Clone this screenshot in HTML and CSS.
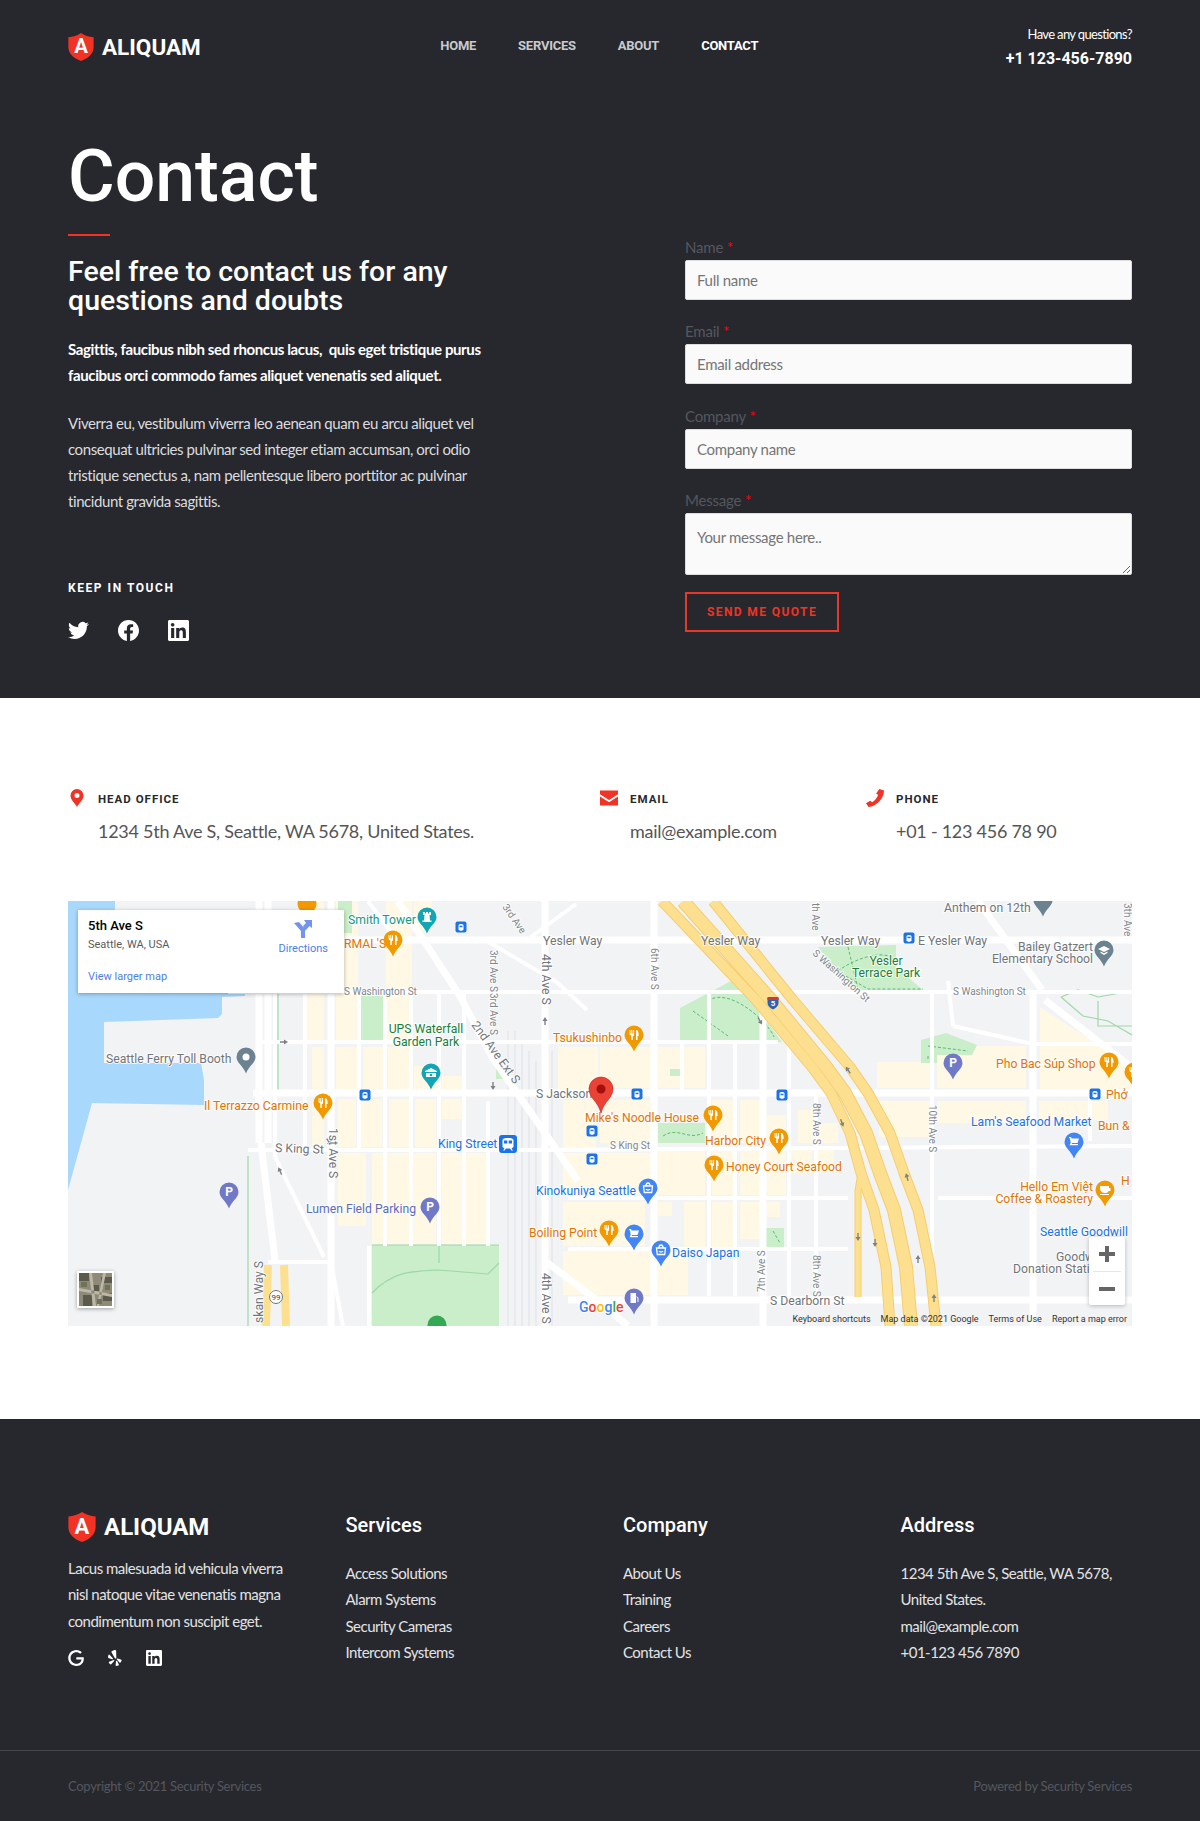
FILE: index.html
```html
<!DOCTYPE html>
<html lang="en">
<head>
    <meta charset="UTF-8">
    <meta name="viewport" content="width=device-width, initial-scale=1.0">
    <title>Aliquam - Contact</title>
    <link rel="stylesheet" href="styles.css">
</head>
<body>
    <svg class="icon-defs" width="0" height="0">
        <defs>
            <path id="ico-shield" d="M14 0C18 2.600 22.500 4.200 27.600 4.600V15C27.600 22 22.500 27 14 30 5.500 27 .4 22 .4 15V4.600C5.500 4.200 10 2.600 14 0z"/>
            <path id="ico-twitter" d="M23.953 4.570a10 10 0 01-2.825.775 4.958 4.958 0 002.163-2.723c-.951.555-2.005.959-3.127 1.184a4.920 4.920 0 00-8.384 4.482C7.690 8.095 4.067 6.130 1.640 3.162a4.822 4.822 0 00-.666 2.475c0 1.710.870 3.213 2.188 4.096a4.904 4.904 0 01-2.228-.616v.06a4.923 4.923 0 003.946 4.827 4.996 4.996 0 01-2.212.085 4.936 4.936 0 004.604 3.417 9.867 9.867 0 01-6.102 2.105c-.39 0-.779-.023-1.170-.067a13.995 13.995 0 007.557 2.209c9.053 0 13.998-7.496 13.998-13.985 0-.21 0-.42-.015-.63A9.935 9.935 0 0024 4.590z"/>
            <path id="ico-facebook" d="M24 12.073c0-6.627-5.373-12-12-12s-12 5.373-12 12c0 5.990 4.388 10.954 10.125 11.854v-8.385H7.078v-3.470h3.047V9.430c0-3.007 1.792-4.669 4.533-4.669 1.312 0 2.686.235 2.686.235v2.953H15.830c-1.491 0-1.956.925-1.956 1.874v2.250h3.328l-.532 3.470h-2.796v8.385C19.612 23.027 24 18.062 24 12.073z"/>
            <path id="ico-linkedin" d="M20.447 20.452h-3.554v-5.569c0-1.328-.027-3.037-1.852-3.037-1.853 0-2.136 1.445-2.136 2.939v5.667H9.351V9h3.414v1.561h.046c.477-.9 1.637-1.850 3.370-1.850 3.601 0 4.267 2.370 4.267 5.455v6.286zM5.337 7.433c-1.144 0-2.063-.926-2.063-2.065 0-1.138.920-2.063 2.063-2.063 1.140 0 2.064.925 2.064 2.063 0 1.139-.925 2.065-2.064 2.065zm1.782 13.019H3.555V9h3.564v11.452zM22.225 0H1.771C.792 0 0 .774 0 1.729v20.542C0 23.227.792 24 1.771 24h20.451C23.200 24 24 23.227 24 22.271V1.729C24 .774 23.200 0 22.222 0h.003z"/>
            <path id="ico-google" d="M12.480 10.920v3.280h7.840c-.24 1.840-.853 3.187-1.787 4.133-1.147 1.147-2.933 2.400-6.053 2.400-4.827 0-8.600-3.893-8.600-8.720s3.773-8.720 8.600-8.720c2.600 0 4.507 1.027 5.907 2.347l2.307-2.307C18.747 1.440 16.133 0 12.480 0 5.867 0 .307 5.387.307 12s5.560 12 12.173 12c3.573 0 6.267-1.173 8.373-3.360 2.160-2.160 2.840-5.213 2.840-7.667 0-.76-.053-1.467-.173-2.053H12.480z"/>
            <path id="pin" d="M0-9.500A9.500 9.500 0 0 1 9.500 0C9.500 6 3 8.500 0 16.500-3 8.500-9.500 6-9.500 0A9.500 9.500 0 0 1 0-9.500z"/>
            <path id="fork" fill="#fff" d="M-4.500-5h1v3.500h.8V-5h1v3.500h.8V-5h1v4.500c0 1-.7 1.500-1.300 1.700V5h-1.500V.2C-4-.1-4.500-.5-4.500-1.500zM2-5c1.800 0 2.600 1.800 2.600 4.500V1H3.500v4H2z"/>
            <path id="cart" fill="#fff" d="M-5-5h2l.6 1.500H5L3.500 1H-1.800l-.5 1H4v1.200H-4.500l1.200-2.500L-4-3.800H-5z"/>
            <path id="bag" fill="none" stroke="#fff" stroke-width="1.300" d="M-4.500-2h9l-.8 6.500h-7.400zM-2-2c0-4 4-4 4 0M-2 1c.8 1.300 3.200 1.300 4 0"/>
            <path id="arrow" fill="#7d8187" d="M0-4L2.500 0H.7V4H-.7V0H-2.500z"/>
            <g id="transit">
                <rect x="-5.500" y="-5.500" width="11" height="11" rx="2" fill="#1a73e8"/>
                <path fill="#fff" d="M-2.500-1.500c0-1 1-1.500 2.500-1.500s2.500.5 2.500 1.500V3h-1v.8h-3V3h-1z"/>
                <rect x="-1.500" y="-1.300" width="3" height="1.500" fill="#1a73e8"/>
            </g>
        </defs>
    </svg>

    <section class="hero">
        <header class="site-header">
            <a class="logo" href="#">
                <svg class="logo-mark" viewBox="0 0 28 30"><use href="#ico-shield" fill="#f13224"/><text class="logo-a" x="14" y="22">A</text></svg>
                <span>ALIQUAM</span>
            </a>
            <nav class="main-nav">
                <a href="#">Home</a>
                <a href="#">Services</a>
                <a href="#">About</a>
                <a href="#" class="active">Contact</a>
            </nav>
            <div class="header-call">
                <div class="call-label">Have any questions?</div>
                <div class="call-number">+1 123-456-7890</div>
            </div>
        </header>

        <div class="hero-body">
            <div class="hero-left">
                <h1>Contact</h1>
                <div class="red-rule"></div>
                <h2>Feel free to contact us for any questions and doubts</h2>
                <p class="lead">Sagittis, faucibus nibh sed rhoncus lacus,&nbsp; quis eget tristique purus faucibus orci commodo fames aliquet venenatis sed aliquet.</p>
                <p class="body-text">Viverra eu, vestibulum viverra leo aenean quam eu arcu aliquet vel consequat ultricies pulvinar sed integer etiam accumsan, orci odio tristique senectus a, nam pellentesque libero porttitor ac pulvinar tincidunt gravida sagittis.</p>
                <h4 class="keep-title">Keep in touch</h4>
                <div class="hero-social">
                    <a href="#"><svg viewBox="0 0 24 24"><use href="#ico-twitter"/></svg></a>
                    <a href="#"><svg viewBox="0 0 24 24"><use href="#ico-facebook"/></svg></a>
                    <a href="#"><svg viewBox="0 0 24 24"><use href="#ico-linkedin"/></svg></a>
                </div>
            </div>

            <form class="quote-form">
                <div class="form-group">
                    <label for="name">Name <span class="required">*</span></label>
                    <input type="text" id="name" placeholder="Full name">
                </div>
                <div class="form-group">
                    <label for="email">Email <span class="required">*</span></label>
                    <input type="email" id="email" placeholder="Email address">
                </div>
                <div class="form-group">
                    <label for="company">Company <span class="required">*</span></label>
                    <input type="text" id="company" placeholder="Company name">
                </div>
                <div class="form-group">
                    <label for="message">Message <span class="required">*</span></label>
                    <textarea id="message" placeholder="Your message here.."></textarea>
                </div>
                <button type="button" class="quote-button">Send me quote</button>
            </form>
        </div>
    </section>

    <section class="locate">
        <div class="info-row">
            <div class="info-item">
                <svg class="info-icon" viewBox="0 0 14 18"><path fill-rule="evenodd" d="M7 0a6.500 6.500 0 0 1 6.500 6.500C13.500 11 9 14 7 18 5 14 .5 11 .5 6.500A6.500 6.500 0 0 1 7 0zm0 4a2.500 2.500 0 1 0 0 5 2.500 2.500 0 0 0 0-5z"/></svg>
                <div>
                    <h5>Head office</h5>
                    <p>1234 5th Ave S, Seattle, WA 5678, United States.</p>
                </div>
            </div>
            <div class="info-item">
                <svg class="info-icon" viewBox="0 0 17 14"><path d="M0 0h17v3.500L8.500 9 0 3.500zM0 5.500l8.500 5.500L17 5.500V14H0z"/></svg>
                <div>
                    <h5>Email</h5>
                    <p>mail@example.com</p>
                </div>
            </div>
            <div class="info-item">
                <svg class="info-icon" viewBox="0 0 17 17"><path d="M12.500 0 17 1.500C17 9 10 16.500 2.500 17L0 13.500l4-2.500 1.800 1.600C8 11.500 10.500 8.500 11.500 5.500L9.500 4.500z"/></svg>
                <div>
                    <h5>Phone</h5>
                    <p>+01 - 123 456 78 90</p>
                </div>
            </div>
        </div>

        <div class="map">
            <svg class="map-canvas" viewBox="0 0 1064 425" width="1064" height="425">
                <rect width="1064" height="425" fill="#f2f3f5"/>
                <path class="water" d="M0 0H47V30L177 60V95L154 96V113L150 117 36 121V162L133 162 136 179V204L24 202 0 289z"/>

                <path class="cream" d="M238 0h18v139h-18zM268 0h22v139h-22zM318 0h26v139h-26zM244 146h12v45h-12zM268 146h23v45h-23zM295 146h22v45h-22zM320 146h23v45h-23zM346 165h25v26h-25zM374 175h22v16h-22zM270 198h18v48h-18zM292 198h22v48h-22zM321 198h21v48h-21zM347 198h21v48h-21zM374 198h22v20h-22zM270 252h28v73h-28zM304 252h64v91h-64zM374 252h46v91h-46zM244 200h12v50h-12zM346 0h18v30h-18z"/>
                <path class="cream" d="M490 146h40v45h-40zM532 146h51v41h-51zM590 146h47v41h-47zM532 199h51v43h-51zM644 199h21v43h-21zM672 199h20v43h-20zM699 214h19v28h-19zM730 209h16v33h-16zM750 222h20v20h-20zM495 199h33v50h-33zM495 252h88v42h-88zM590 249h47v45h-47zM644 249h21v45h-21zM672 249h20v45h-20zM699 249h19v45h-19zM723 249h21v23h-21zM750 249h16v17h-16zM590 301h14v14h-14zM616 301h21v45h-21zM644 301h21v45h-21zM672 301h20v37h-20zM699 301h13v15h-13zM495 350h88v44h-88zM590 350h30v44h-30zM495 301h82v44h-82z"/>
                <path class="cream" d="M809 161h53v26h-53zM869 145h89v42h-89zM972 106l92 60v23h-92zM811 200h51v36h-51zM869 200h89v22h-89zM971 200h69v19h-69z"/>

                <path class="park" d="M270 0h14v32h-14zM291 95h26v44h-26zM304 344H431V425H304zM750 46l78-2v22l27 23h-67l-28-30zM665 79l-53 28v32l102 2-31-42zM590 222h47v20h-47zM697 327h19v19h-19zM853 139l25-7 31 12-5 10h-35v8h-16zM602 168h10v7h-10zM428 156l12 22h-12z"/>
                <path class="park-line" d="M210 91V195M180 255V425M304 344H431M371 344V362M304 392C325 370 345 370 370 369L420 373 431 362M993 96L1010 89 1030 96 1064 90M993 96L1015 115 1040 120 1064 134M1030 100V125H1064"/>
                <path class="trail" d="M752 60L800 88H855M770 70C790 55 820 48 828 60M780 46L790 88M640 100C660 85 700 120 706 136M625 110L660 135M595 235C610 225 620 240 635 232M705 330L712 342M860 145L900 150M860 155V160"/>

                <path class="rail" d="M440 130V425M447 130V425M454 140V425M461 150V425M468 160V425M484 150V425"/>

                <g class="road road-thin">
                    <path d="M207 91V256M291 91V250M317 91V345M343 91V345M371 91V345M396 91V345M237 91V250M420 200V345M614 140V190M641 91V395M667 140V395M721 140V395M748 190V395M864 90V425M586 50V91M1022 190V240"/>
                    <path d="M160 91H1064M190 141H700M540 141L710 141M180 249L480 249 1064 245M500 297H780M870 297H1064M500 348H780M885 125L965 143H1064M207 256L256 356M200 361H263M263 361L275 425M301 345L301 425M880 80L885 125"/>
                    <path d="M300 0L330 40M508 3L463 36M417 39L490 82 519 109"/>
                </g>
                <g class="road road-main">
                    <path d="M263 0V425M586 0V425M695 91V425M965 89V425M477 0V425"/>
                    <path d="M262 39H1064M185 192H1064M500 399H1064M193 242L207 359M191 0V242M200 0V242"/>
                    <path d="M330 0L392 95 424 156 477 232 510 280M910 0L974 89M977 99L1058 162 1064 170M477 360L530 400 560 425"/>
                </g>

                <path class="hwy-edge edge-a" d="M594 0L688 99 744 166 763 192 782 232 793 272 806 309 818 366 822 425M645 0L725 99 782 166 800 192 822 232 836 272 850 309 862 366 868 425"/>
                <path class="hwy-edge edge-b" d="M793 272L790 290V396"/>
                <path class="hwy-edge edge-c" d="M615 0L703 99 758 166 777 192 798 232 812 272 826 309 838 366 843 425"/>
                <path class="hwy-a" d="M594 0L688 99 744 166 763 192 782 232 793 272 806 309 818 366 822 425"/>
                <path class="hwy-b" d="M793 272L790 290V396"/>
                <path class="hwy-c" d="M615 0L703 99 758 166 777 192 798 232 812 272 826 309 838 366 843 425"/>
                <path class="hwy-a" d="M645 0L725 99 782 166 800 192 822 232 836 272 850 309 862 366 868 425"/>
                <path class="hwy-stub" d="M200 364L198 425M216 364L218 425"/>

                <!-- one way arrows -->
                <use href="#arrow" transform="translate(692 120) rotate(150)"/>
                <use href="#arrow" transform="translate(774 222) rotate(160)"/>
                <use href="#arrow" transform="translate(780 169) rotate(-35)"/>
                <use href="#arrow" transform="translate(839 276) rotate(-15)"/>
                <use href="#arrow" transform="translate(790 336) rotate(180)"/>
                <use href="#arrow" transform="translate(807 342) rotate(180)"/>
                <use href="#arrow" transform="translate(850 358)"/>
                <use href="#arrow" transform="translate(866 397)"/>
                <use href="#arrow" transform="translate(261 241) rotate(145)"/>
                <use href="#arrow" transform="translate(212 270) rotate(-25)"/>
                <use href="#arrow" transform="translate(477 120)"/>
                <use href="#arrow" transform="translate(425 185) rotate(180)"/>
                <use href="#arrow" transform="translate(216 141) rotate(90)"/>

                <!-- street names -->
                <g class="lbl gray">
                    <text x="475" y="44">Yesler Way</text>
                    <text x="633" y="44">Yesler Way</text>
                    <text x="753" y="44">Yesler Way</text>
                    <text x="850" y="44">E Yesler Way</text>
                    <text x="468" y="197">S Jackson</text>
                    <text x="207" y="251" transform="rotate(2 207 251)">S King St</text>
                    <text x="702" y="404">S Dearborn St</text>
                    <text x="38" y="162">Seattle Ferry Toll Booth</text>
                    <text x="876" y="11">Anthem on 12th</text>
                    <text x="1025" y="50" class="end">Bailey Gatzert</text>
                    <text x="1025" y="62" class="end">Elementary School</text>
                    <text x="988" y="360">Goodwill</text>
                    <text x="945" y="372">Donation Station</text>
                    <text x="403" y="124" transform="rotate(54 403 124)">2nd Ave Ext S</text>
                    <text transform="translate(261 227) rotate(90)">1st Ave S</text>
                    <text transform="translate(474 372) rotate(90)">4th Ave S</text>
                    <text transform="translate(474 53) rotate(90)">4th Ave S</text>
                    <text transform="translate(195 422) rotate(-90)">skan Way S</text>
                </g>
                <g class="lbl small">
                    <text x="276" y="94">S Washington St</text>
                    <text x="885" y="94">S Washington St</text>
                    <text transform="translate(744 53) rotate(42)">S Washington St</text>
                    <text x="542" y="248">S King St</text>
                    <text transform="translate(422 49) rotate(90)">3rd Ave S</text>
                    <text transform="translate(422 92) rotate(90)">3rd Ave S</text>
                    <text transform="translate(434 6) rotate(55)">3rd Ave</text>
                    <text transform="translate(583 47) rotate(90)">6th Ave S</text>
                    <text transform="translate(745 202) rotate(90)">8th Ave S</text>
                    <text transform="translate(745 354) rotate(90)">8th Ave S</text>
                    <text transform="translate(861 204) rotate(90)">10th Ave S</text>
                    <text transform="translate(697 391) rotate(-90)">7th Ave S</text>
                    <text transform="translate(744 2) rotate(90)">th Ave</text>
                    <text transform="translate(1056 2) rotate(90)">3th Ave</text>
                </g>
                <g class="lbl orange">
                    <text x="276" y="47">RMAL'S</text>
                    <text x="485" y="141">Tsukushinbo</text>
                    <text x="136" y="209">Il Terrazzo Carmine</text>
                    <text x="517" y="221">Mike's Noodle House</text>
                    <text x="637" y="244">Harbor City</text>
                    <text x="658" y="270">Honey Court Seafood</text>
                    <text x="461" y="336">Boiling Point</text>
                    <text x="928" y="167">Pho Bac Súp Shop</text>
                    <text x="1038" y="198">Phở</text>
                    <text x="1030" y="229">Bun &amp;</text>
                    <text x="1025" y="290" class="end">Hello Em Việt</text>
                    <text x="1025" y="302" class="end">Coffee &amp; Roastery</text>
                    <text x="1053" y="284">H</text>
                </g>
                <g class="lbl blue">
                    <text x="370" y="247">King Street</text>
                    <text x="468" y="294">Kinokuniya Seattle</text>
                    <text x="604" y="356">Daiso Japan</text>
                    <text x="903" y="225">Lam's Seafood Market</text>
                    <text x="972" y="335">Seattle Goodwill</text>
                </g>
                <g class="lbl green">
                    <text x="358" y="132" class="mid">UPS Waterfall</text>
                    <text x="358" y="145" class="mid">Garden Park</text>
                    <text x="818" y="64" class="mid">Yesler</text>
                    <text x="818" y="76" class="mid">Terrace Park</text>
                </g>
                <text class="lbl teal" x="280" y="23">Smith Tower</text>
                <text class="lbl indigo" x="238" y="312">Lumen Field Parking</text>

                <!-- pins -->
                <g class="pin-orange">
                    <g transform="translate(239 3)"><use href="#pin"/></g>
                    <g transform="translate(325 39)"><use href="#pin"/><use href="#fork"/></g>
                    <g transform="translate(255 202)"><use href="#pin"/><use href="#fork"/></g>
                    <g transform="translate(566 134)"><use href="#pin"/><use href="#fork"/></g>
                    <g transform="translate(645 214)"><use href="#pin"/><use href="#fork"/></g>
                    <g transform="translate(711 237)"><use href="#pin"/><use href="#fork"/></g>
                    <g transform="translate(646 264)"><use href="#pin"/><use href="#fork"/></g>
                    <g transform="translate(541 329)"><use href="#pin"/><use href="#fork"/></g>
                    <g transform="translate(1041 161)"><use href="#pin"/><use href="#fork"/></g>
                    <g transform="translate(1066 171)"><use href="#pin"/><use href="#fork"/></g>
                    <g transform="translate(1037 289)"><use href="#pin"/><path fill="#fff" d="M-5-4H4V-2H5.500V1H3.500C3 2.500 2 3 0 3S-4 2.500-5-1zM-5 4H4V5H-5z"/></g>
                </g>
                <g class="pin-blue">
                    <g transform="translate(580 287)"><use href="#pin"/><use href="#bag"/></g>
                    <g transform="translate(566 333)"><use href="#pin"/><use href="#cart"/></g>
                    <g transform="translate(593 349)"><use href="#pin"/><use href="#bag"/></g>
                    <g transform="translate(1006 241)"><use href="#pin"/><use href="#cart"/></g>
                </g>
                <g class="pin-indigo">
                    <g transform="translate(161 291)"><use href="#pin"/><text class="pin-p" y="4">P</text></g>
                    <g transform="translate(362 306)"><use href="#pin"/><text class="pin-p" y="4">P</text></g>
                    <g transform="translate(885 162)"><use href="#pin"/><text class="pin-p" y="4">P</text></g>
                    <g transform="translate(566 397)"><use href="#pin"/><path fill="#fff" d="M-3.500-5H2V5H-3.500zM2.500-2L4.500 0V4H3.500V.5L2.500-1z"/></g>
                </g>
                <g class="pin-gray">
                    <g transform="translate(178 156)"><use href="#pin"/><circle r="3.500" fill="#fff"/></g>
                    <g transform="translate(975 -1)"><use href="#pin"/></g>
                    <g transform="translate(1036 49)"><use href="#pin"/><path fill="#fff" d="M0-4L6-1 0 2-6-1zM-3.500 1.500L0 3.300 3.500 1.500V3L0 5-3.500 3z"/></g>
                </g>
                <g class="pin-teal">
                    <g transform="translate(359 16)"><use href="#pin"/><path fill="#fff" d="M-4-5h2v1.500h1V-5h2v1.500h1V-5h2v3H2.500L3 3.500H4.500V5h-9V3.500H-3L-2.500-2H-4z"/></g>
                    <g transform="translate(363 172)"><use href="#pin"/><path fill="#fff" d="M0-5L6-2V-1H-6V-2zM-5 0H5V4H-5z"/><circle cy="2" r="1.300" fill="#12a5b5"/></g>
                </g>
                <g class="pin-green" transform="translate(369 424)"><use href="#pin"/></g>

                <!-- transit stops -->
                <use href="#transit" x="393" y="26"/>
                <use href="#transit" x="841" y="37"/>
                <use href="#transit" x="297" y="194"/>
                <use href="#transit" x="524" y="230"/>
                <use href="#transit" x="524" y="258"/>
                <use href="#transit" x="569" y="193"/>
                <use href="#transit" x="714" y="194"/>
                <use href="#transit" x="1027" y="193"/>
                <g transform="translate(440 243)">
                    <rect x="-9" y="-9" width="18" height="18" rx="3" fill="#1a73e8"/>
                    <path fill="#fff" d="M-5.500-3.500c0-2 2.500-2.500 5.500-2.500s5.500.5 5.500 2.500V3L3.500 4.500 5 6.500H3.500L2 4.500H-2L-3.500 6.500H-5L-3.500 4.500-5.500 3z"/>
                    <rect x="-4" y="-3.500" width="3.300" height="3" fill="#1a73e8"/>
                    <rect x=".7" y="-3.500" width="3.300" height="3" fill="#1a73e8"/>
                </g>

                <!-- I-5 shield -->
                <g transform="translate(705 102)">
                    <path d="M-5.500-5h11v5c0 3-2.500 5-5.500 6.500C-3 5-5.500 3-5.500 0z" fill="#2b62b5"/>
                    <rect x="-5.500" y="-6" width="11" height="3" fill="#cf3a33"/>
                    <text class="shield-num" y="3">5</text>
                </g>
                <!-- 99 shield -->
                <g transform="translate(208 396)">
                    <circle r="6.500" fill="#fff" stroke="#70757a"/>
                    <text class="shield-99" y="3">99</text>
                </g>

                <!-- selected place marker -->
                <g transform="translate(533 191)">
                    <path d="M0-15A12 12 0 0 1 12-3C12 6 3 9 0 21-3 9-12 6-12-3A12 12 0 0 1 0-15z" fill="#ea4335" stroke="#c5221f" stroke-width=".6"/>
                    <circle cy="-3" r="4.500" fill="#a50e0e"/>
                </g>

                <text class="g-logo" x="511" y="411"><tspan fill="#4285f4">G</tspan><tspan fill="#ea4335">o</tspan><tspan fill="#fbbc04">o</tspan><tspan fill="#4285f4">g</tspan><tspan fill="#34a853">l</tspan><tspan fill="#ea4335">e</tspan></text>
            </svg>

            <div class="place-card">
                <div class="place-main">
                    <div class="place-name">5th Ave S</div>
                    <div class="place-addr">Seattle, WA, USA</div>
                    <a class="place-link" href="#">View larger map</a>
                </div>
                <div class="place-dir">
                    <svg width="18" height="18" viewBox="0 0 18 18"><path fill="#7394ec" d="M0 3L5 2 11 9V18H7V11zM9 6L12 3 10 0H18V8L15.500 6 11.500 10.500z"/></svg>
                    <span>Directions</span>
                </div>
            </div>

            <div class="sat-thumb">
                <svg width="33" height="33" viewBox="0 0 33 33">
                    <rect width="33" height="33" fill="#8f8a77"/>
                    <path fill="#5c5a4c" d="M0 0h10v8H0zM22 4h11v6H22zM4 22h9v11H4zM24 20h9v8h-9zM14 12h6v6h-6z"/>
                    <path fill="#bdb8a6" d="M10 0l4 33h3L13 0zM0 15l33 6v3L0 18zM24 0l-6 33h2L27 0z"/>
                    <path fill="#6e7358" d="M2 9h6v5H2zM26 12h5v5h-5zM18 26h5v5h-5z"/>
                </svg>
            </div>

            <div class="zoom-ctrl">
                <div class="zoom-btn"><span class="zoom-plus"></span></div>
                <div class="zoom-sep"></div>
                <div class="zoom-btn"><span class="zoom-minus"></span></div>
            </div>

            <div class="map-attr">
                <span>Keyboard shortcuts</span>
                <span>Map data ©2021 Google</span>
                <span>Terms of Use</span>
                <span>Report a map error</span>
            </div>
        </div>
    </section>

    <footer class="site-footer">
        <div class="footer-main">
            <div class="footer-col">
                <a class="logo logo-footer" href="#">
                    <svg class="logo-mark" viewBox="0 0 28 30"><use href="#ico-shield" fill="#f13224"/><text class="logo-a" x="14" y="22">A</text></svg>
                    <span>ALIQUAM</span>
                </a>
                <p class="footer-about">Lacus malesuada id vehicula viverra nisl natoque vitae venenatis magna condimentum non suscipit eget.</p>
                <div class="footer-social">
                    <a href="#"><svg viewBox="0 0 24 24"><use href="#ico-google"/></svg></a>
                    <a href="#"><svg class="yelp" viewBox="0 0 24 24"><path d="M11 0c1-.4 2.500 0 2.700.6L14 11.500c0 1.500-1.600 1.800-2.200.8L6.500 3C6 2 9 .6 11 0zM10 15c1 .1 1.300.9.8 1.500L6 21.800c-.5.500-3-1.500-3.300-3-.1-.6.100-.9.500-1zM8.800 12.500c.4 1.200-.3 1.700-1 1.500L2 12.100c-.8-.3-.4-4 .6-5 .3-.3.800-.3 1.200 0zM13.500 16.800c.7-.9 1.700-.6 2 .2L18 22.500c.1.700-3 1.800-4.500 1.300-.4-.2-.7-.6-.6-1zM14.500 13.700c.1-.9 1-1.400 1.700-.9l5.500 2c.7.4-.6 3.800-1.800 4.300-.5.200-.9.100-1.200-.2z"/></svg></a>
                    <a href="#"><svg viewBox="0 0 24 24"><use href="#ico-linkedin"/></svg></a>
                </div>
            </div>
            <div class="footer-col">
                <h3>Services</h3>
                <ul>
                    <li>Access Solutions</li>
                    <li>Alarm Systems</li>
                    <li>Security Cameras</li>
                    <li>Intercom Systems</li>
                </ul>
            </div>
            <div class="footer-col">
                <h3>Company</h3>
                <ul>
                    <li>About Us</li>
                    <li>Training</li>
                    <li>Careers</li>
                    <li>Contact Us</li>
                </ul>
            </div>
            <div class="footer-col">
                <h3>Address</h3>
                <ul>
                    <li>1234 5th Ave S, Seattle, WA 5678, United States.</li>
                    <li>mail@example.com</li>
                    <li>+01-123 456 7890</li>
                </ul>
            </div>
        </div>
        <div class="footer-bottom">
            <span>Copyright © 2021 Security Services</span>
            <span>Powered by Security Services</span>
        </div>
    </footer>
</body>
</html>
```
FILE: styles.css
```css
* {
    box-sizing: border-box;
}
body {
    margin: 0;
    font-family: "Lato", "Liberation Sans", sans-serif;
    font-size: 16px;
    background: #fff;
    color: #555;
}
a {
    color: inherit;
    text-decoration: none;
}
.icon-defs {
    position: absolute;
}

/* hero */
.hero {
    background: #26282e;
    color: #fff;
    height: 698px;
}
.site-header {
    display: flex;
    justify-content: space-between;
    align-items: center;
    padding: 22px 68px 21px;
}
.logo {
    display: flex;
    align-items: center;
    gap: 8px;
    font-family: "Roboto", sans-serif;
    font-weight: 700;
    font-size: 22.500px;
    color: #fff;
}
.logo-mark {
    width: 26px;
    height: 28px;
    display: block;
}
.logo-a {
    font-family: "Roboto", sans-serif;
    font-weight: 700;
    font-size: 22px;
    fill: #fff;
    text-anchor: middle;
}
.main-nav {
    display: flex;
    gap: 42px;
    margin-right: 8px;
    padding-bottom: 2px;
    font-family: "Roboto", sans-serif;
    font-weight: 700;
    font-size: 13px;
    letter-spacing: -0.25px;
    text-transform: uppercase;
    color: #c9cacc;
}
.main-nav .active {
    color: #fff;
}
.header-call {
    text-align: right;
}
.call-label {
    font-size: 13px;
    line-height: 24px;
    letter-spacing: -0.65px;
}
.call-number {
    font-family: "Roboto", sans-serif;
    font-weight: 700;
    font-size: 16px;
    line-height: 25px;
}
.hero-body {
    display: flex;
    justify-content: space-between;
    padding: 0 68px;
}
.hero-left {
    width: 420px;
    padding-top: 49px;
}
h1 {
    font-family: "Roboto", sans-serif;
    font-weight: 500;
    font-size: 71.500px;
    line-height: 72px;
    margin: 0;
}
.red-rule {
    width: 42px;
    height: 2px;
    background: #f13224;
    margin-top: 21px;
}
h2 {
    font-family: "Roboto", sans-serif;
    font-weight: 500;
    font-size: 28.500px;
    line-height: 29px;
    margin: 21px 0 0;
}
.lead {
    font-weight: 700;
    font-size: 15px;
    line-height: 26.400px;
    letter-spacing: -0.37px;
    margin: 21px 0 0;
}
.body-text {
    font-size: 15px;
    line-height: 26.200px;
    letter-spacing: -0.42px;
    margin: 21px 0 0;
    color: #dcdcdf;
}
.keep-title {
    font-family: "Roboto", sans-serif;
    font-weight: 700;
    font-size: 12px;
    line-height: 16px;
    letter-spacing: 1.550px;
    text-transform: uppercase;
    margin: 65px 0 0;
}
.hero-social {
    display: flex;
    gap: 29px;
    margin-top: 24px;
}
.hero-social svg {
    width: 21px;
    height: 21px;
    display: block;
    fill: #fff;
}

/* form */
.quote-form {
    width: 447px;
    padding-top: 145px;
}
.form-group {
    margin-bottom: 21.300px;
}
.form-group:last-of-type {
    margin-bottom: 17px;
}
label {
    display: block;
    font-size: 15px;
    letter-spacing: -0.2px;
    line-height: 20px;
    margin-bottom: 3px;
    color: #55575e;
}
label .required {
    color: #f00;
}
input,
textarea {
    display: block;
    width: 100%;
    height: 40px;
    padding: 0 11px;
    border: 1px solid #ddd;
    border-radius: 2px;
    background: #fafafa;
    font-family: "Lato", sans-serif;
    font-size: 15px;
    letter-spacing: -0.3px;
    color: #333;
}
textarea {
    height: 62px;
    padding-top: 14px;
}
input::placeholder,
textarea::placeholder {
    color: #757575;
    opacity: 1;
}
.quote-button {
    display: block;
    width: 154px;
    height: 40px;
    background: transparent;
    border: 2px solid #e8372b;
    color: #f13224;
    font-family: "Roboto", sans-serif;
    font-weight: 700;
    font-size: 12px;
    letter-spacing: 1.400px;
    text-transform: uppercase;
}

/* address row and map */
.locate {
    background: #fff;
    padding: 93px 68px;
}
.info-row {
    display: grid;
    grid-template-columns: 532px 266px 1fr;
}
.info-item {
    display: flex;
    gap: 12px;
}
.info-icon {
    width: 18px;
    height: 18px;
    flex-shrink: 0;
    fill: #f13224;
    margin-top: -2px;
}
.info-item h5 {
    font-family: "Roboto", sans-serif;
    font-weight: 700;
    font-size: 11.500px;
    line-height: 16px;
    letter-spacing: 1px;
    text-transform: uppercase;
    color: #26282e;
    margin: 0;
}
.info-item p {
    font-size: 18px;
    line-height: 26px;
    letter-spacing: -0.26px;
    margin: 11px 0 0;
}
.map {
    position: relative;
    height: 425px;
    margin-top: 57px;
    overflow: hidden;
}
.map-canvas {
    display: block;
}
.water {
    fill: #a8d8fc;
}
.cream {
    fill: #fff8e4;
}
.park {
    fill: #c9eec9;
}
.park-line {
    fill: none;
    stroke: #9fd8a8;
    stroke-width: 1.200;
}
.trail {
    fill: none;
    stroke: #5fb878;
    stroke-width: 1;
    stroke-dasharray: 3 2;
}
.rail {
    fill: none;
    stroke: #dfe1e5;
    stroke-width: 1;
}
.road {
    fill: none;
    stroke: #fff;
}
.road-thin {
    stroke-width: 4;
}
.road-main {
    stroke-width: 7;
}
.hwy-edge {
    fill: none;
    stroke: #f5cd70;
    stroke-linejoin: round;
}
.edge-a {
    stroke-width: 11;
}
.edge-b {
    stroke-width: 7;
}
.edge-c {
    stroke-width: 14;
}
.hwy-a,
.hwy-b,
.hwy-c,
.hwy-stub {
    fill: none;
    stroke: #fde08f;
    stroke-linejoin: round;
}
.hwy-a {
    stroke-width: 9;
}
.hwy-b {
    stroke-width: 5;
}
.hwy-c {
    stroke-width: 12;
}
.hwy-stub {
    stroke-width: 8;
}
.lbl text,
text.lbl {
    font-family: "Roboto", sans-serif;
    font-size: 12.200px;
    paint-order: stroke;
    stroke: rgba(255, 255, 255, 0.8);
    stroke-width: 2px;
}
.lbl .end {
    text-anchor: end;
}
.lbl .mid {
    text-anchor: middle;
}
.lbl.gray text {
    fill: #70757a;
}
.lbl.small text {
    fill: #80868b;
    font-size: 10px;
}
.lbl.orange text {
    fill: #e37400;
}
.lbl.blue text {
    fill: #1a73e8;
}
.lbl.green text {
    fill: #188038;
}
text.lbl.teal {
    fill: #129a8c;
}
text.lbl.indigo {
    fill: #5c6bc0;
}
.pin-orange {
    fill: #f29900;
}
.pin-blue {
    fill: #4285f4;
}
.pin-indigo {
    fill: #7078c8;
}
.pin-gray {
    fill: #6c8290;
}
.pin-teal {
    fill: #12a5b5;
}
.pin-green {
    fill: #34a853;
}
.pin-p {
    font-family: "Roboto", sans-serif;
    font-weight: 700;
    font-size: 12px;
    fill: #fff;
    text-anchor: middle;
}
.shield-num {
    font-family: "Roboto", sans-serif;
    font-weight: 700;
    font-size: 8px;
    fill: #fff;
    text-anchor: middle;
}
.shield-99 {
    font-family: "Roboto", sans-serif;
    font-size: 8px;
    fill: #3c4043;
    text-anchor: middle;
}
.g-logo {
    font-family: "Roboto", sans-serif;
    font-weight: 500;
    font-size: 14px;
    paint-order: stroke;
    stroke: #fff;
    stroke-width: 2px;
}
.place-card {
    position: absolute;
    left: 10px;
    top: 9px;
    width: 266px;
    height: 83px;
    background: #fff;
    box-shadow: 0 1px 4px rgba(0, 0, 0, 0.3);
    display: flex;
    justify-content: space-between;
    padding: 8px 16px 0 10px;
    font-family: "Roboto", sans-serif;
    font-size: 11px;
}
.place-name {
    font-weight: 500;
    font-size: 13px;
    line-height: 16px;
    color: #000;
}
.place-addr {
    color: #5b5b5b;
    line-height: 14px;
    margin-top: 4px;
}
.place-link {
    display: block;
    color: #4d7fe0;
    line-height: 14px;
    margin-top: 18px;
}
.place-dir {
    display: flex;
    flex-direction: column;
    align-items: center;
    color: #4d7fe0;
    padding-top: 2px;
    gap: 4px;
}
.sat-thumb {
    position: absolute;
    left: 9px;
    top: 370px;
    width: 37px;
    height: 37px;
    border: 2px solid #fff;
    box-shadow: 0 1px 4px rgba(0, 0, 0, 0.35);
}
.sat-thumb svg {
    display: block;
}
.zoom-ctrl {
    position: absolute;
    left: 1021px;
    top: 336px;
    width: 36px;
    height: 68px;
    background: #fff;
    box-shadow: 0 1px 4px rgba(0, 0, 0, 0.25);
    border-radius: 2px;
}
.zoom-btn {
    height: 33.500px;
    position: relative;
}
.zoom-sep {
    height: 1px;
    margin: 0 4px;
    background: #e6e6e6;
}
.zoom-plus,
.zoom-minus {
    position: absolute;
    left: 10px;
    top: 15px;
    width: 16px;
    height: 4px;
    background: #666;
}
.zoom-plus::after {
    content: "";
    position: absolute;
    left: 6px;
    top: -6px;
    width: 4px;
    height: 16px;
    background: #666;
}
.map-attr {
    position: absolute;
    right: 5px;
    bottom: 0;
    display: flex;
    gap: 10px;
    font-family: "Roboto", sans-serif;
    font-size: 9px;
    line-height: 13px;
    color: #333;
}

/* footer */
.site-footer {
    background: #26282e;
    color: #e3e3e5;
}
.footer-main {
    display: grid;
    grid-template-columns: repeat(4, 277.500px);
    height: 331px;
    padding: 93px 0 0 68px;
}
.logo-footer {
    font-size: 24px;
}
.logo-footer .logo-mark {
    width: 28px;
    height: 30px;
}
.footer-about {
    width: 230px;
    line-height: 26.300px;
    font-size: 15px;
    letter-spacing: -0.5px;
    margin: 13px 0 0;
}
.footer-social {
    display: flex;
    gap: 23px;
    margin-top: 16px;
}
.footer-social svg {
    width: 16px;
    height: 16px;
    display: block;
    fill: #fff;
}
.footer-social .yelp {
    height: 18px;
    margin-top: -1px;
}
.site-footer h3 {
    font-family: "Roboto", sans-serif;
    font-weight: 500;
    font-size: 20px;
    line-height: 26px;
    color: #fff;
    margin: 0;
}
.site-footer ul {
    list-style: none;
    margin: 22px 0 0;
    padding: 0;
    width: 230px;
    font-size: 15px;
    letter-spacing: -0.5px;
    line-height: 26.300px;
}
.footer-bottom {
    display: flex;
    justify-content: space-between;
    align-items: center;
    height: 71px;
    padding: 0 68px 1px;
    border-top: 1px solid #44464c;
    font-size: 13px;
    letter-spacing: -0.3px;
    color: #55575d;
}
```
